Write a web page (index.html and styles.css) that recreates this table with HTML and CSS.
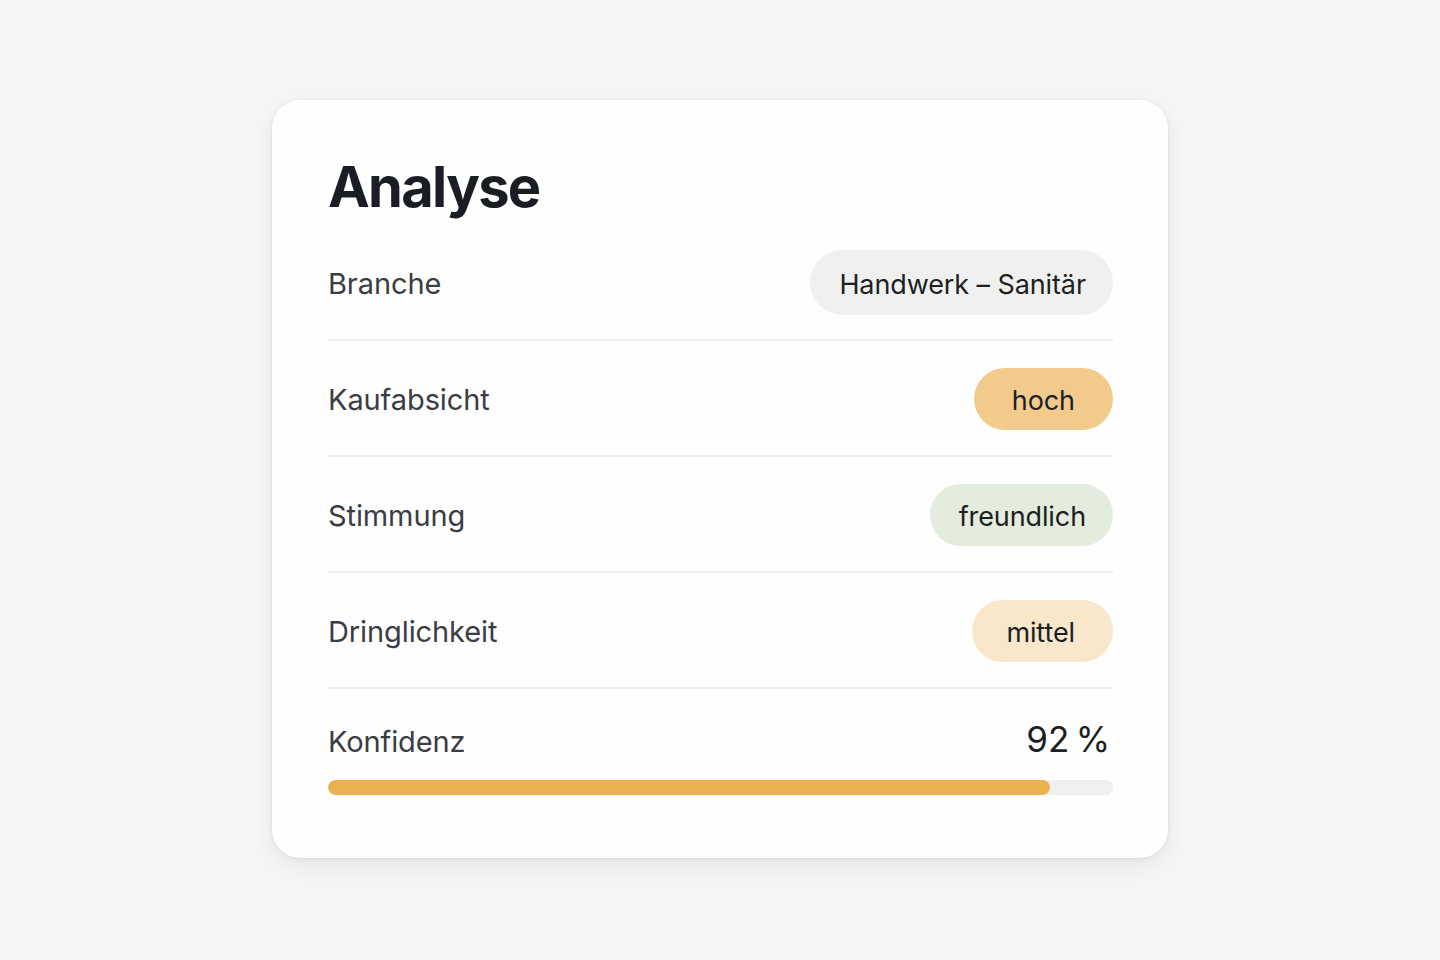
FILE: index.html
```html
<!DOCTYPE html>
<html lang="de">
<head>
<meta charset="utf-8">
<title>Analyse</title>
<link rel="stylesheet" href="styles.css">
</head>
<body>
<main class="page">
  <section class="card">
    <h1 class="title">Analyse</h1>
    <div class="row">
      <span class="label">Branche</span>
      <span class="pill pill-gray">Handwerk – Sanitär</span>
    </div>
    <div class="row">
      <span class="label">Kaufabsicht</span>
      <span class="pill pill-orange">hoch</span>
    </div>
    <div class="row">
      <span class="label">Stimmung</span>
      <span class="pill pill-green">freundlich</span>
    </div>
    <div class="row">
      <span class="label">Dringlichkeit</span>
      <span class="pill pill-peach">mittel</span>
    </div>
    <div class="confidence">
      <div class="confidence-head">
        <span class="label">Konfidenz</span>
        <span class="value">92&#8239;%</span>
      </div>
      <div class="track"><div class="fill" style="width: 92%"></div></div>
    </div>
  </section>
</main>
</body>
</html>
```

FILE: styles.css
```css
* { box-sizing: border-box; }
html, body { margin: 0; padding: 0; }
body {
  background: #f7f6f4;
  font-family: Inter, "Noto Sans", "Liberation Sans", sans-serif;
  color: #1b1e23;
}
.page {
  width: 1440px;
  height: 960px;
  display: flex;
  justify-content: center;
  padding-top: 100px;
}
.card {
  width: 896px;
  height: 758px;
  background: #fefefe;
  border-radius: 28px;
  box-shadow: 0 0 0 1px rgba(0,0,0,0.025), 0 8px 28px rgba(0,0,0,0.07), 0 2px 6px rgba(0,0,0,0.04);
  padding: 59px 55px 0 56px;
  display: flex;
  flex-direction: column;
}
.title {
  margin: 0 0 10px;
  font-size: 56px;
  line-height: 56px;
  font-weight: 700;
  letter-spacing: -1.7px;
  color: #1a1d23;
}
.row {
  height: 116px;
  padding-top: 1px;
  display: flex;
  align-items: center;
  justify-content: space-between;
  border-bottom: 2px solid #ededed;
}
.label {
  font-size: 29px;
  color: #3a3d43;
  letter-spacing: -0.1px;
  padding-top: 2px;
}
.pill {
  height: 62px;
  display: inline-flex;
  align-items: center;
  padding: 3px 27px 0 29px;
  border-radius: 31px;
  font-size: 27px;
  color: #1c1f23;
  letter-spacing: -0.1px;
}
.row:first-of-type .pill { height: 65px; border-radius: 33px; }
.pill-gray { background: #f0f0ef; }
.pill-orange { background: #f2ca8c; padding: 3px 38px 0 38px; }
.pill-green { background: #e3ecdd; }
.pill-peach { background: #f8e7cb; padding: 3px 38px 0 34px; }
.confidence {
  padding-top: 29px;
}
.confidence .label { padding-top: 0; }
.confidence-head {
  display: flex;
  justify-content: space-between;
  align-items: baseline;
}
.value {
  font-size: 35px;
  color: #1b1e23;
  padding-right: 3px;
  letter-spacing: -0.3px;
}
.track {
  margin-top: 20px;
  height: 15px;
  border-radius: 8px;
  background: #efefef;
  overflow: hidden;
}
.fill {
  height: 100%;
  background: #ecb14f;
  border-radius: 8px;
}
```
